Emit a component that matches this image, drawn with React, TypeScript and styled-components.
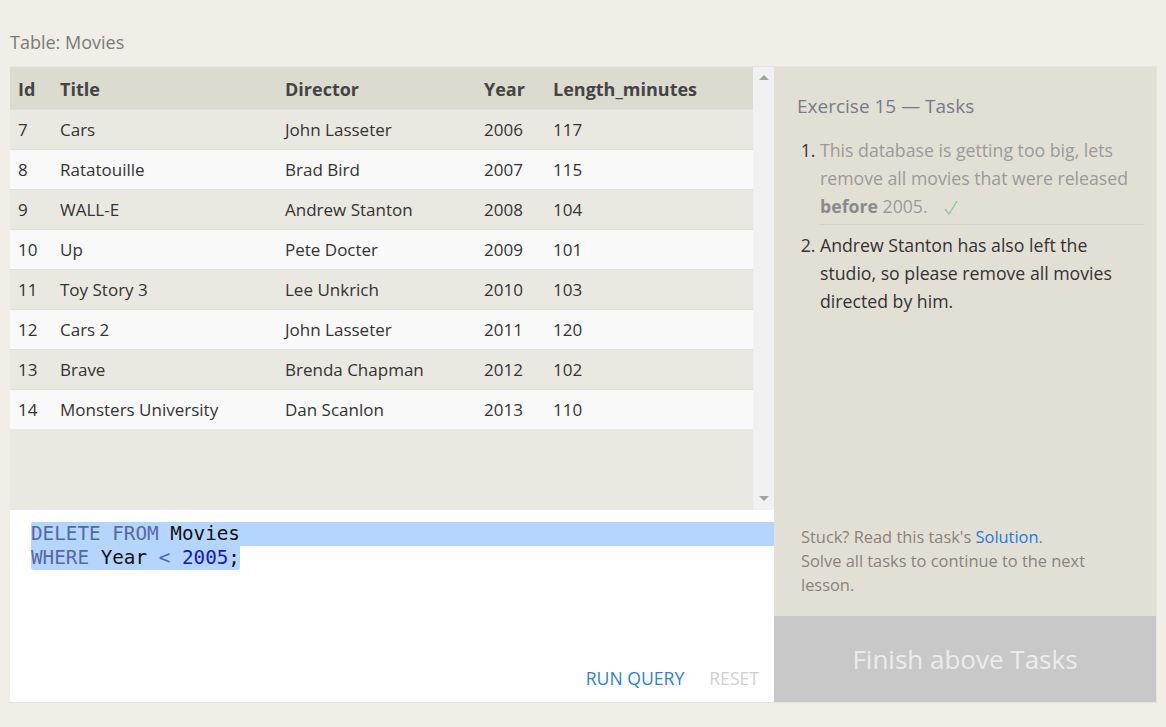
import React from 'react';
import styled, { createGlobalStyle } from 'styled-components';

const GlobalStyle = createGlobalStyle`
    html, body {
        margin: 0;
        padding: 0;
        background: #f0eee6;
        font-family: 'Open Sans', 'Noto Sans', sans-serif;
    }
`;

const Page = styled.div`
    padding: 29px 9px 0 10px;
    width: 1147px;
`;

const Caption = styled.div`
    font-size: 18px;
    line-height: 26px;
    color: #7a7a7a;
    margin-bottom: 11px;
`;

const Main = styled.div`
    display: flex;
    height: 635px;
    border: 1px solid #e7e5dd;
    border-left: none;
`;

const LeftColumn = styled.div`
    width: 764px;
    display: flex;
    flex-direction: column;
`;

const TableArea = styled.div`
    display: flex;
    height: 443px;
    background: #eae9e1;
`;

const TableScroll = styled.div`
    flex: 1;
`;

const COLUMNS = '42px 225px 199px 69px 1fr';

const HeaderRow = styled.div`
    display: grid;
    grid-template-columns: ${COLUMNS};
    height: 42px;
    padding-top: 1px;
    box-sizing: border-box;
    align-items: center;
    background: #dcdbd0;
    font-weight: 700;
    font-size: 18px;
    color: #444;
`;

const Row = styled.div<{ $even?: boolean }>`
    display: grid;
    grid-template-columns: ${COLUMNS};
    height: 39px;
    align-items: center;
    border-top: 1px solid #dfdfdb;
    background: ${(p) => (p.$even ? '#f9f9f9' : '#eae9e1')};
    font-size: 17px;
    color: #333;
    &:first-of-type {
        border-top: none;
        height: 40px;
    }
`;

const Cell = styled.div`
    padding-left: 8px;
    white-space: nowrap;
`;

const Scrollbar = styled.div`
    width: 21px;
    background: #f1f1f1;
    display: flex;
    flex-direction: column;
    justify-content: space-between;
    align-items: center;
    padding: 8px 0 9px;
    box-sizing: border-box;
`;

const Arrow = styled.div<{ $down?: boolean }>`
    width: 0;
    height: 0;
    border-left: 5px solid transparent;
    border-right: 5px solid transparent;
    ${(p) => (p.$down ? 'border-top: 5px solid #a3a3a3;' : 'border-bottom: 5px solid #a3a3a3;')}
`;

const Editor = styled.div`
    flex: 1;
    background: #fff;
    display: flex;
    flex-direction: column;
    justify-content: space-between;
    padding-top: 12px;
`;

const Code = styled.div`
    font-family: 'DejaVu Sans Mono', 'Liberation Mono', monospace;
    font-size: 19.3px;
    line-height: 24px;
    padding-left: 21px;
    color: #111;
`;

const CodeLine = styled.div<{ $full?: boolean }>`
    background: #b4d5fe;
    width: ${(p) => (p.$full ? 'auto' : 'fit-content')};
    border-radius: ${(p) => (p.$full ? '2px 0 0 0' : '0 0 3px 3px')};
    white-space: pre;
`;

const Keyword = styled.span`
    color: #5468a8;
`;

const NumberToken = styled.span`
    color: #1616c4;
`;

const Actions = styled.div`
    display: flex;
    justify-content: flex-end;
    gap: 25px;
    padding: 0 15px 12px 0;
`;

const ActionButton = styled.span<{ $disabled?: boolean }>`
    font-size: 17.6px;
    line-height: 24px;
    color: ${(p) => (p.$disabled ? '#cfcfcf' : '#2b7fe0')};
`;

const RightColumn = styled.div`
    flex: 1;
    background: #e2e0d5;
    display: flex;
    flex-direction: column;
`;

const TasksBody = styled.div`
    flex: 1;
    padding: 25px 12px 0 23px;
    display: flex;
    flex-direction: column;
`;

const TasksTitle = styled.div`
    font-size: 19px;
    line-height: 28px;
    color: #727c88;
    margin-bottom: 16px;
`;

const TaskList = styled.ol`
    margin: 0;
    padding: 0 0 0 23px;
`;

const TaskItem = styled.li<{ $done?: boolean }>`
    font-size: 17.7px;
    line-height: 28px;
    color: ${(p) => (p.$done ? '#9a9a9a' : '#333')};
    padding-bottom: 4px;
    margin-bottom: 6px;
    border-bottom: ${(p) => (p.$done ? '1px solid #d4d2c8' : 'none')};
    &::marker {
        color: #333;
    }
    b {
        color: #8a8a8a;
    }
`;

const Check = styled.svg`
    margin-left: 16px;
    vertical-align: -2px;
`;

const Footer = styled.div`
    margin-top: auto;
    padding: 0 0 19px 4px;
    max-width: 310px;
    font-size: 16.4px;
    line-height: 24px;
    color: #8a827c;
`;

const SolutionLink = styled.span`
    color: #2278e6;
`;

const FinishButton = styled.div`
    height: 86px;
    background: #c8c8c8;
    color: #ececec;
    font-size: 26px;
    display: flex;
    align-items: center;
    justify-content: center;
`;

const movies = [
    [7, 'Cars', 'John Lasseter', 2006, 117],
    [8, 'Ratatouille', 'Brad Bird', 2007, 115],
    [9, 'WALL-E', 'Andrew Stanton', 2008, 104],
    [10, 'Up', 'Pete Docter', 2009, 101],
    [11, 'Toy Story 3', 'Lee Unkrich', 2010, 103],
    [12, 'Cars 2', 'John Lasseter', 2011, 120],
    [13, 'Brave', 'Brenda Chapman', 2012, 102],
    [14, 'Monsters University', 'Dan Scanlon', 2013, 110],
];

const headers = ['Id', 'Title', 'Director', 'Year', 'Length_minutes'];

export default function App() {
    return (
        <>
            <GlobalStyle />
            <Page>
                <Caption>Table: Movies</Caption>
                <Main>
                    <LeftColumn>
                        <TableArea>
                            <TableScroll>
                                <HeaderRow>
                                    {headers.map((h) => (
                                        <Cell key={h}>{h}</Cell>
                                    ))}
                                </HeaderRow>
                                {movies.map((m, i) => (
                                    <Row key={m[0]} $even={i % 2 === 1}>
                                        {m.map((v, j) => (
                                            <Cell key={j}>{v}</Cell>
                                        ))}
                                    </Row>
                                ))}
                            </TableScroll>
                            <Scrollbar>
                                <Arrow />
                                <Arrow $down />
                            </Scrollbar>
                        </TableArea>
                        <Editor>
                            <Code>
                                <CodeLine $full>
                                    <Keyword>DELETE FROM</Keyword> Movies
                                </CodeLine>
                                <CodeLine>
                                    <Keyword>WHERE</Keyword> Year <Keyword>&lt;</Keyword>{' '}
                                    <NumberToken>2005</NumberToken>;
                                </CodeLine>
                            </Code>
                            <Actions>
                                <ActionButton>RUN QUERY</ActionButton>
                                <ActionButton $disabled>RESET</ActionButton>
                            </Actions>
                        </Editor>
                    </LeftColumn>
                    <RightColumn>
                        <TasksBody>
                            <TasksTitle>Exercise 15 — Tasks</TasksTitle>
                            <TaskList>
                                <TaskItem $done>
                                    This database is getting too big, lets remove all movies that were released{' '}
                                    <b>before</b> 2005.
                                    <Check width="14" height="15" viewBox="0 0 14 15">
                                        <path d="M1 9 L5 14 L13 1" fill="none" stroke="#86cf92" strokeWidth="1.4" />
                                    </Check>
                                </TaskItem>
                                <TaskItem>
                                    Andrew Stanton has also left the studio, so please remove all movies directed by
                                    him.
                                </TaskItem>
                            </TaskList>
                            <Footer>
                                Stuck? Read this task's <SolutionLink>Solution</SolutionLink>.
                                <br />
                                Solve all tasks to continue to the next lesson.
                            </Footer>
                        </TasksBody>
                        <FinishButton>Finish above Tasks</FinishButton>
                    </RightColumn>
                </Main>
            </Page>
        </>
    );
}
